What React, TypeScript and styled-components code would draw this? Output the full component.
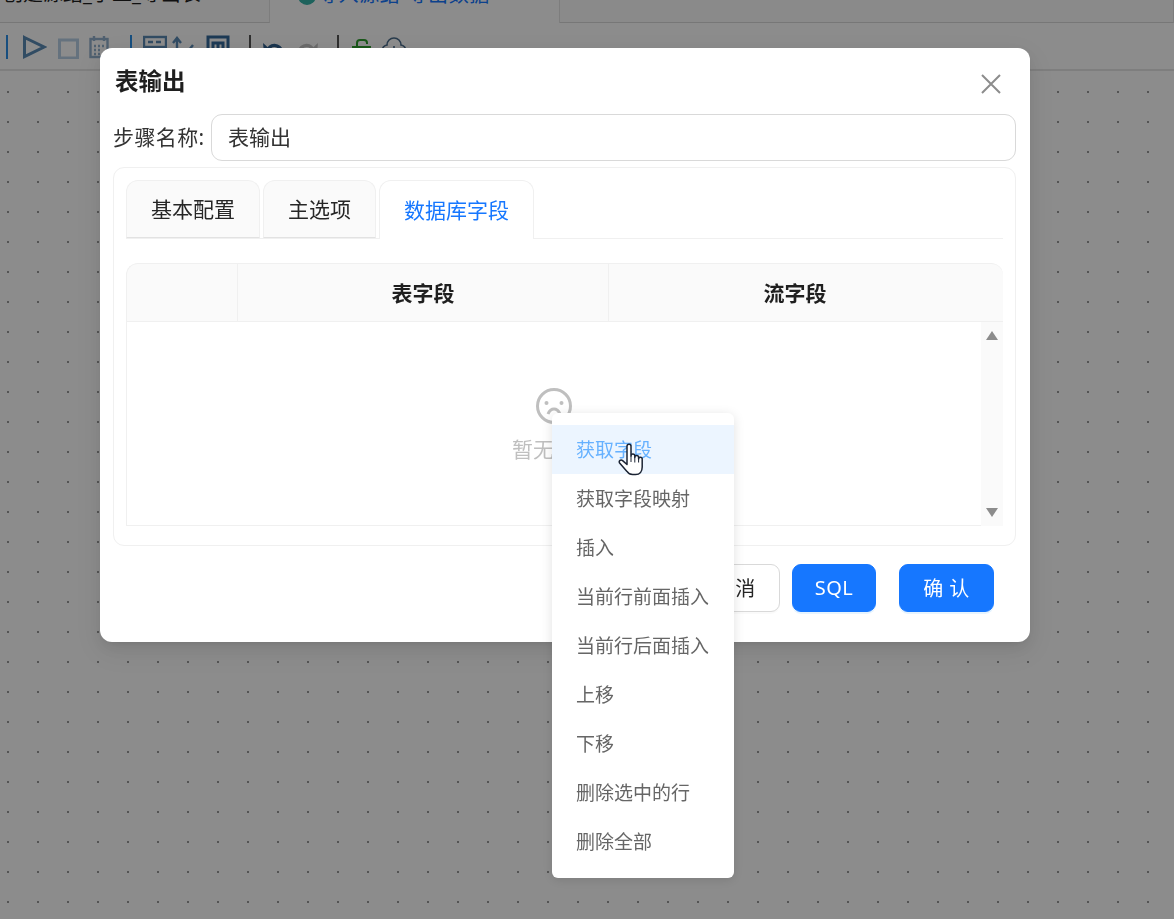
import React from "react";
import styled, { createGlobalStyle } from "styled-components";

const FONT = `"Noto Sans", "Noto Sans CJK SC", sans-serif`;

const GlobalStyle = createGlobalStyle`
  html, body { margin: 0; padding: 0; height: 100%; background: #fff; }
  #root { height: 100%; }
  * { box-sizing: border-box; }
  body { font-family: ${FONT}; overflow: hidden; }
`;

const Page = styled.div`
  height: 919px;
  display: flex;
  flex-direction: column;
  background: #fff;
`;

const TabBar = styled.div`
  height: 23px;
  flex: none;
  display: flex;
  overflow: hidden;
`;

const PageTab = styled.div<{ $active?: boolean; $width?: number }>`
  flex: ${(p) => (p.$width ? `0 0 ${p.$width}px` : "1")};
  display: flex;
  align-items: flex-end;
  gap: 2px;
  padding: 0 0 16.5px ${(p) => (p.$active ? "28px" : "3px")};
  font-size: 20px;
  letter-spacing: ${(p) => (p.$active ? "0.6px" : "0")};
  line-height: 24px;
  white-space: nowrap;
  color: ${(p) => (p.$active ? "#1677ff" : "#1f1f1f")};
  background: ${(p) => (p.$active ? "#fff" : "#fcfcfc")};
  border-bottom: ${(p) => (p.$active ? "none" : "1px solid #d9d9d9")};
  border-right: 1px solid #e4e4e4;
`;

const TabDot = styled.span`
  width: 18px;
  height: 18px;
  margin-bottom: 2px;
  border-radius: 50%;
  background: #36b3a8;
  flex: none;
`;

const Toolbar = styled.div`
  height: 48px;
  flex: none;
  display: flex;
  align-items: flex-start;
  padding: 12px 0 0 6px;
  background: #fff;
  border-bottom: 2px solid #e6e6e6;
`;

const Sep = styled.span<{ $color: string; $mx: number }>`
  width: 2px;
  height: 24px;
  flex: none;
  margin-right: ${(p) => p.$mx}px;
  background: ${(p) => p.$color};
`;

const ToolIcon = styled.svg<{ $mr: number }>`
  flex: none;
  width: 24px;
  height: 24px;
  margin-right: ${(p) => p.$mr}px;
`;

const Canvas = styled.div`
  flex: 1;
  background-color: #fff;
  background-image: radial-gradient(circle at center, #9a9a9a 1px, transparent 1.4px);
  background-size: 30px 30px;
  background-position: -7px 6px;
`;

const Mask = styled.div`
  position: fixed;
  inset: 0;
  background: rgba(0, 0, 0, 0.45);
`;

const Modal = styled.div`
  width: 930px;
  height: 594px;
  margin: 48px 0 0 100px;
  padding: 0 14px 30px 13px;
  background: #fff;
  border-radius: 12px;
  box-shadow: 0 6px 16px rgba(0, 0, 0, 0.08), 0 3px 6px -4px rgba(0, 0, 0, 0.12),
    0 9px 28px 8px rgba(0, 0, 0, 0.05);
  display: flex;
  flex-direction: column;
`;

const ModalHeader = styled.div`
  height: 66px;
  flex: none;
  display: flex;
  align-items: center;
  justify-content: space-between;
  padding: 0 15px 0 2px;
`;

const ModalTitle = styled.div`
  font-size: 23.5px;
  font-weight: 700;
  line-height: 30px;
  color: #1f1f1f;
`;

const CloseIcon = styled.svg`
  width: 20px;
  height: 20px;
  margin-top: 6px;
  color: #8c8c8c;
`;

const FormRow = styled.div`
  height: 47px;
  flex: none;
  display: flex;
  align-items: center;
`;

const FormLabel = styled.label`
  width: 98px;
  flex: none;
  padding-bottom: 4px;
  font-size: 21px;
  letter-spacing: 0.4px;
  color: #333;
  white-space: nowrap;
`;

const NameInput = styled.div`
  flex: 1;
  height: 47px;
  display: flex;
  align-items: center;
  padding: 0 16px 3px;
  font-size: 21px;
  color: #333;
  border: 1px solid #d9d9d9;
  border-radius: 11px;
`;

const Card = styled.div`
  height: 379px;
  flex: none;
  margin-top: 6px;
  padding: 12px 12px 19px;
  border: 1px solid #f0f0f0;
  border-radius: 11px;
`;

const TabNav = styled.div`
  height: 59px;
  display: flex;
  border-bottom: 1px solid #f0f0f0;
  margin-bottom: 24px;
`;

const TabItem = styled.div<{ $active?: boolean; $width: number; $mr: number }>`
  width: ${(p) => p.$width}px;
  height: ${(p) => (p.$active ? "59px" : "58px")};
  margin-right: ${(p) => p.$mr}px;
  display: flex;
  align-items: center;
  justify-content: center;
  padding-bottom: 3px;
  font-size: 21px;
  color: ${(p) => (p.$active ? "#1677ff" : "#262626")};
  background: ${(p) => (p.$active ? "#fff" : "#fafafa")};
  border: 1px solid #f0f0f0;
  border-bottom: ${(p) => (p.$active ? "none" : "1px solid #e2e2e2")};
  border-radius: 12px 12px 0 0;
`;

const Table = styled.div`
  height: 263px;
  display: flex;
  flex-direction: column;
`;

const TableHead = styled.div`
  height: 59px;
  flex: none;
  display: grid;
  grid-template-columns: 111px 371px 372px 1fr;
  background: #fafafa;
  border: 1px solid #f0f0f0;
  border-right: none;
  border-radius: 12px 12px 0 0;
`;

const HeadCell = styled.div<{ $divider?: boolean }>`
  display: flex;
  align-items: center;
  justify-content: center;
  padding-bottom: 2px;
  font-size: 21px;
  font-weight: 700;
  color: #1f1f1f;
  border-right: ${(p) => (p.$divider ? "1px solid #f0f0f0" : "none")};
`;

const TableBody = styled.div`
  flex: 1;
  display: flex;
`;

const EmptyPane = styled.div`
  flex: 1;
  display: flex;
  flex-direction: column;
  align-items: center;
  padding-top: 66px;
  border-left: 1px solid #f0f0f0;
  border-bottom: 1px solid #f0f0f0;
`;

const EmptyIcon = styled.svg`
  width: 36px;
  height: 36px;
  color: #bfbfbf;
`;

const EmptyText = styled.div`
  margin-top: 11px;
  font-size: 21px;
  line-height: 28px;
  color: #bfbfbf;
`;

const ScrollGutter = styled.div`
  width: 22px;
  flex: none;
  display: flex;
  flex-direction: column;
  align-items: center;
  justify-content: space-between;
  padding: 9px 0 9px;
  background: #fafafa;
`;

const ScrollArrow = styled.span<{ $down?: boolean }>`
  width: 0;
  height: 0;
  border-left: 6.5px solid transparent;
  border-right: 6.5px solid transparent;
  border-bottom: ${(p) => (p.$down ? "none" : "9px solid #8c8c8c")};
  border-top: ${(p) => (p.$down ? "9px solid #8c8c8c" : "none")};
`;

const Footer = styled.div`
  display: flex;
  justify-content: flex-end;
  margin-top: 18px;
  padding-right: 22px;
`;

const Button = styled.button<{ $primary?: boolean; $width: number; $ml: number }>`
  width: ${(p) => p.$width}px;
  height: 48px;
  margin-left: ${(p) => p.$ml}px;
  padding: 0 0 2px;
  font-family: ${FONT};
  font-size: 20px;
  letter-spacing: 0.4px;
  color: ${(p) => (p.$primary ? "#fff" : "#262626")};
  background: ${(p) => (p.$primary ? "#1677ff" : "#fff")};
  border: 1px solid ${(p) => (p.$primary ? "#1677ff" : "#d9d9d9")};
  border-radius: 9px;
  box-shadow: ${(p) =>
    p.$primary ? "0 2px 0 rgba(5, 145, 255, 0.1)" : "0 2px 0 rgba(0, 0, 0, 0.02)"};
`;

const ContextMenu = styled.ul`
  position: absolute;
  left: 552px;
  top: 413px;
  width: 182px;
  margin: 0;
  padding: 12px 0;
  list-style: none;
  background: #fff;
  border-radius: 6px;
  box-shadow: 0 2px 12px rgba(0, 0, 0, 0.12);
`;

const MenuItem = styled.li<{ $active?: boolean }>`
  height: 49px;
  display: flex;
  align-items: center;
  padding: 0 0 2px 24px;
  font-size: 19px;
  white-space: nowrap;
  color: ${(p) => (p.$active ? "#66b1ff" : "#666")};
  background: ${(p) => (p.$active ? "#ecf5ff" : "transparent")};
`;

const Cursor = styled.svg`
  position: absolute;
  left: 618px;
  top: 443px;
  width: 27px;
  height: 33px;
`;

const MENU_ITEMS = [
  "获取字段",
  "获取字段映射",
  "插入",
  "当前行前面插入",
  "当前行后面插入",
  "上移",
  "下移",
  "删除选中的行",
  "删除全部",
];

const App = () => {
  return (
    <>
      <GlobalStyle />
      <Page>
        <TabBar>
          <PageTab $width={270}>创建源结_手工_导出表</PageTab>
          <PageTab $active $width={290}>
            <TabDot />
            导入源结-导出数据
          </PageTab>
          <PageTab />
        </TabBar>
        <Toolbar>
          <Sep $color="#2a8fe8" $mx={15} />
          <ToolIcon $mr={11} viewBox="0 0 24 24" fill="none" stroke="#5a8ab5" strokeWidth="3">
            <path d="M1.5 2.5 21 12 1.5 21.5Z" />
          </ToolIcon>
          <ToolIcon $mr={7} viewBox="0 0 24 24" fill="none" stroke="#b8cfe6" strokeWidth="3">
            <rect x="1.5" y="5" width="18" height="18" />
          </ToolIcon>
          <ToolIcon $mr={17} viewBox="0 0 24 24" fill="none" stroke="#92b0cc" strokeWidth="2.4">
            <rect x="1.5" y="4" width="17" height="18" />
            <path d="M5 1v5M15 1v5M5 11h2M9 11h2M13 11h2M5 15h2M9 15h2M5 19h2M9 19h2" />
          </ToolIcon>
          <Sep $color="#2a8fe8" $mx={11} />
          <ToolIcon $mr={5} viewBox="0 0 24 24" fill="none" stroke="#5a8ab5" strokeWidth="2.4">
            <rect x="1" y="2" width="22" height="10" />
            <path d="M5 7h5M13 7h5" />
            <path d="M1 16h22" />
          </ToolIcon>
          <ToolIcon $mr={10} viewBox="0 0 24 24" fill="none" stroke="#5a8ab5" strokeWidth="2.4">
            <path d="M5 24V4M1 8l4-5 4 5M13 20 21 10" />
          </ToolIcon>
          <ToolIcon $mr={19} viewBox="0 0 24 24" fill="none" stroke="#356a9b" strokeWidth="3">
            <rect x="2" y="2" width="20" height="20" />
            <path d="M7 16V8h10v8M12 8v8" />
          </ToolIcon>
          <Sep $color="#555" $mx={11} />
          <ToolIcon $mr={9} viewBox="0 0 24 24" fill="none" stroke="#2f5f8e" strokeWidth="3.4">
            <path d="M5 17C8 8 17 8 21 18" />
            <path d="M1 8l1 10 9-1Z" fill="#2f5f8e" stroke="none" />
          </ToolIcon>
          <ToolIcon $mr={18} viewBox="0 0 24 24" fill="none" stroke="#c4c4c4" strokeWidth="3.4">
            <path d="M19 17C16 8 7 8 3 18" />
            <path d="M23 8l-1 10-9-1Z" fill="#c4c4c4" stroke="none" />
          </ToolIcon>
          <Sep $color="#555" $mx={13} />
          <ToolIcon $mr={6} viewBox="0 0 24 24" fill="none" stroke="#2e9e2e" strokeWidth="2">
            <path d="M5 12V8a3 3 0 0 1 3-3h4a3 3 0 0 1 3 3v1" />
            <path d="M1 12h17v11H1z" />
          </ToolIcon>
          <ToolIcon $mr={0} viewBox="0 0 24 24" fill="none" stroke="#4a6c8c" strokeWidth="1.6">
            <path d="M6 20a5 5 0 0 1-1-10 7 7 0 0 1 14 0 5 5 0 0 1-1 10Z" />
            <path d="M12 11v2" />
          </ToolIcon>
        </Toolbar>
        <Canvas />
      </Page>

      <Mask>
        <Modal>
          <ModalHeader>
            <ModalTitle>表输出</ModalTitle>
            <CloseIcon viewBox="0 0 20 20" fill="none" stroke="currentColor" strokeWidth="2">
              <path d="M1 1l18 18M19 1 1 19" />
            </CloseIcon>
          </ModalHeader>
          <FormRow>
            <FormLabel>步骤名称:</FormLabel>
            <NameInput>表输出</NameInput>
          </FormRow>
          <Card>
            <TabNav>
              <TabItem $width={134} $mr={3}>基本配置</TabItem>
              <TabItem $width={113} $mr={3}>主选项</TabItem>
              <TabItem $active $width={155} $mr={0}>数据库字段</TabItem>
            </TabNav>
            <Table>
              <TableHead>
                <HeadCell $divider />
                <HeadCell $divider>表字段</HeadCell>
                <HeadCell>流字段</HeadCell>
                <HeadCell />
              </TableHead>
              <TableBody>
                <EmptyPane>
                  <EmptyIcon viewBox="0 0 36 36" fill="none" stroke="currentColor" strokeWidth="3">
                    <circle cx="18" cy="18" r="16.5" />
                    <circle cx="10.5" cy="15" r="2" fill="currentColor" stroke="none" />
                    <circle cx="25.5" cy="15" r="2" fill="currentColor" stroke="none" />
                    <path d="M12 26c1.5-3.5 3.5-5 6-5s4.5 1.5 6 5" strokeWidth="3" />
                  </EmptyIcon>
                  <EmptyText>暂无数据</EmptyText>
                </EmptyPane>
                <ScrollGutter>
                  <ScrollArrow />
                  <ScrollArrow $down />
                </ScrollGutter>
              </TableBody>
            </Table>
          </Card>
          <Footer>
            <Button $width={95} $ml={0}>取 消</Button>
            <Button $primary $width={84} $ml={12}>SQL</Button>
            <Button $primary $width={95} $ml={23}>确 认</Button>
          </Footer>
        </Modal>

        <ContextMenu>
          {MENU_ITEMS.map((item, i) => (
            <MenuItem key={item} $active={i === 0}>
              {item}
            </MenuItem>
          ))}
        </ContextMenu>

        <Cursor viewBox="0 0 27 33" fill="#fff" stroke="#1b2333" strokeWidth="1.5" strokeLinejoin="round">
          <path d="M9 17V3.2a2 2 0 0 1 4 0V13a1.9 1.9 0 0 1 3.8 0v1.5a1.9 1.9 0 0 1 3.8 0V16a1.8 1.8 0 0 1 3.6 0v8c0 4.4-2.4 7.6-6.6 7.6h-3c-2.6 0-4.2-1-5.6-3.2L1.6 20c-1.2-2 1.2-4 3-2.4L9 21.5Z" />
          <path d="M13 13v6M16.8 14.500V19.500M20.600 16v3.500" fill="none" strokeWidth="1" />
        </Cursor>
      </Mask>
    </>
  );
};

export default App;
